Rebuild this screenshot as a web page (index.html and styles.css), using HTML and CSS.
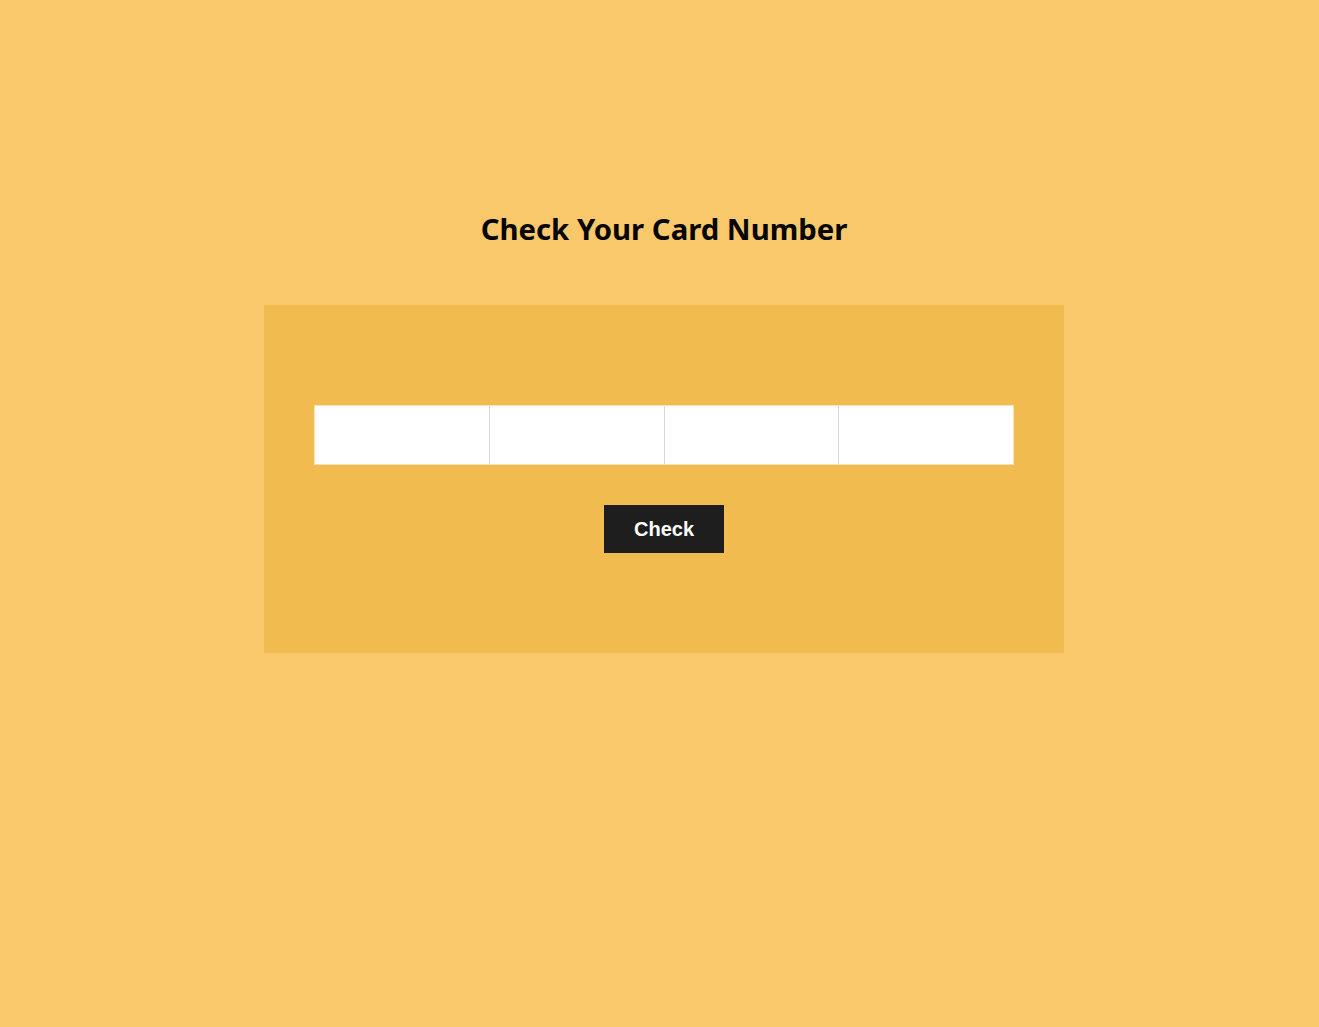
FILE: index.html
```html
<!DOCTYPE html>
<html lang="en">
<head>
<meta charset="utf-8">
<title>Check Your Card Number</title>
<link rel="stylesheet" href="styles.css">
</head>
<body>
<main class="page">
  <h1 class="title">Check Your Card Number</h1>
  <section class="card">
    <div class="fields">
      <input class="field" type="text" maxlength="4">
      <input class="field" type="text" maxlength="4">
      <input class="field" type="text" maxlength="4">
      <input class="field" type="text" maxlength="4">
    </div>
    <button class="btn" type="button">Check</button>
  </section>
</main>
</body>
</html>
```

FILE: styles.css
```css
html, body {
  height: 100%;
}
body {
  margin: 0 0 0 9px;
  background: #f9c86a;
  font-family: "Noto Sans", "Liberation Sans", sans-serif;
}
.page {
  width: 800px;
  margin: 0 auto;
  padding-top: 207px;
}
.title {
  margin: 0;
  text-align: center;
  font-size: 29.3px;
  line-height: 44px;
  font-weight: 700;
  color: #050505;
}
.card {
  margin-top: 54px;
  height: 348px;
  box-sizing: border-box;
  background: #f2bb4f;
  padding: 100px 50px 0;
  display: flex;
  flex-direction: column;
  align-items: center;
}
.fields {
  display: flex;
  width: 700px;
  height: 60px;
  box-sizing: border-box;
  border: 1px solid #fbe3b3;
  background: #fff;
}
.field {
  flex: 1;
  min-width: 0;
  border: 0;
  border-right: 1px solid #d8d8d8;
  margin: 0;
  padding: 0 10px;
  background: #fff;
  outline: none;
  font-size: 18px;
}
.field:last-child {
  border-right: 0;
}
.btn {
  margin-top: 40px;
  width: 120px;
  height: 48px;
  border: 0;
  background: #1e1e1e;
  color: #fff;
  font-family: "Liberation Sans", Arial, sans-serif;
  font-weight: 700;
  font-size: 20px;
  padding: 0;
}
```
